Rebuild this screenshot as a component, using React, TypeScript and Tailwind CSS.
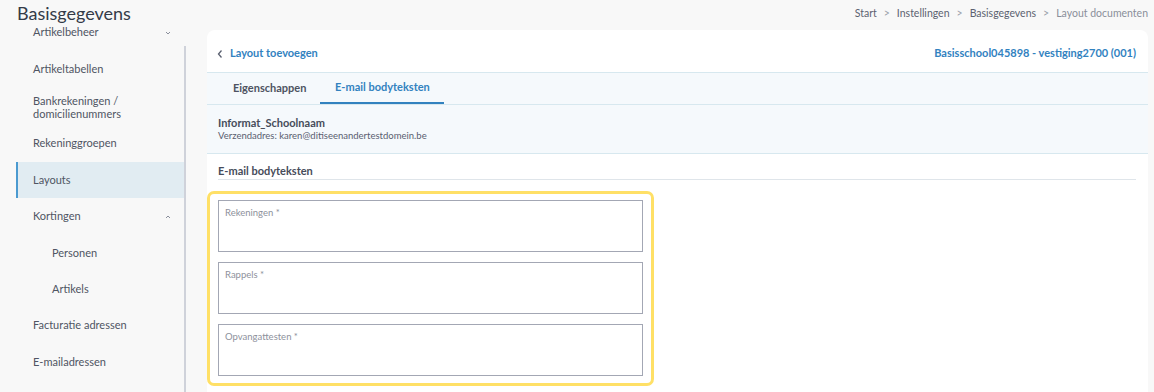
import React from "react";

const ChevDown = () => (
  <svg width="6" height="4" viewBox="0 0 6 4" className="text-[#8a8f9c]">
    <path d="M1 1 L3 3 L5 1" fill="none" stroke="currentColor" strokeWidth="1" />
  </svg>
);
const ChevUp = () => (
  <svg width="6" height="4" viewBox="0 0 6 4" className="text-[#8a8f9c]">
    <path d="M1 3 L3 1 L5 3" fill="none" stroke="currentColor" strokeWidth="1" />
  </svg>
);

const Sep = () => <span className="mx-[7px] text-[#9aa0aa]">&gt;</span>;

function SideItem({
  label,
  h,
  indent,
  active,
  chev,
  twoLine,
}: {
  label: React.ReactNode;
  h: string;
  indent?: boolean;
  active?: boolean;
  chev?: "down" | "up";
  twoLine?: boolean;
}) {
  const pad = active
    ? "bg-[#e1ecf2] border-l-2 border-[#4b9ad0] pl-[15px]"
    : indent
    ? "pl-[36px]"
    : "pl-[17px]";
  return (
    <div className={`flex items-center justify-between pr-[15px] ${h} ${pad}`}>
      <span className={`text-[11px] text-[#4f5563] ${twoLine ? "leading-[13px]" : ""}`}>{label}</span>
      {chev === "down" && <ChevDown />}
      {chev === "up" && <ChevUp />}
    </div>
  );
}

function Field({ label }: { label: string }) {
  return (
    <div className="h-[52px] border border-[#a3a7b4] bg-white px-[6px] pt-[2px] leading-[13px]">
      <span className="text-[9.5px] text-[#8d919c]">{label}</span>
    </div>
  );
}

export default function App() {
  return (
    <div
      className="w-[1154px] h-[392px] bg-[#f8f8f8] overflow-hidden relative"
      style={{ fontFamily: "Lato, 'Noto Sans', sans-serif" }}
    >
      <div className="h-[27px] flex items-start justify-between pl-[17px] pr-[6px]">
        <div className="text-[18px] leading-[24px] mt-[1px] text-[#343b48]">Basisgegevens</div>
        <div className="text-[10.5px] mt-[6px] text-[#5c6270] flex items-center">
          <span>Start</span>
          <Sep />
          <span>Instellingen</span>
          <Sep />
          <span>Basisgegevens</span>
          <Sep />
          <span className="text-[#8a8f9a]">Layout documenten</span>
        </div>
      </div>

      <div className="flex">
        <div className="relative w-[186px] h-[365px] overflow-hidden">
          <div className="w-[170px] ml-[16px] -mt-[13px]">
            <SideItem label="Artikelbeheer" h="h-[37px]" chev="down" />
            <SideItem label="Artikeltabellen" h="h-[37px]" />
            <SideItem
              label={
                <>
                  Bankrekeningen /<br />
                  domicilienummers
                </>
              }
              h="h-[37px]"
              twoLine
            />
            <SideItem label="Rekeninggroepen" h="h-[37px]" />
            <SideItem label="Layouts" h="h-[36px]" active />
            <SideItem label="Kortingen" h="h-[37px]" chev="up" />
            <SideItem label="Personen" h="h-[36px]" indent />
            <SideItem label="Artikels" h="h-[36px]" indent />
            <SideItem label="Facturatie adressen" h="h-[37px]" />
            <SideItem label="E-mailadressen" h="h-[36px]" />
          </div>
          <div className="absolute left-[184px] top-[19px] bottom-0 w-[2px] bg-[#cfd2da]" />
        </div>

        <div className="ml-[21px] mt-[3px] w-[941px] h-[400px] bg-white rounded-[8px] overflow-hidden">
          <div className="h-[42px] flex items-center justify-between pl-[9px] pr-[12px] pt-[5px]">
            <div className="flex items-center">
              <svg width="8" height="10" viewBox="0 0 8 10" className="text-[#5a6070]">
                <path d="M5.5 1.5 L2.5 5 L5.5 8.5" fill="none" stroke="currentColor" strokeWidth="1.3" />
              </svg>
              <span className="ml-[6px] text-[11px] font-bold text-[#3282bf]">Layout toevoegen</span>
            </div>
            <span className="text-[11px] font-bold text-[#3282bf]">Basisschool045898 - vestiging2700 (001)</span>
          </div>
          <div className="h-[32px] border-t border-[#d7e8ef] bg-[#f5f9fc] flex pl-[14px]">
            <div className="px-[12px] flex items-center text-[11px] font-bold text-[#4d5361]">Eigenschappen</div>
            <div className="ml-[2px] w-[124px] flex items-center justify-center text-[11px] font-bold text-[#3282bf] border-b-2 border-[#3282bf]">
              E-mail bodyteksten
            </div>
          </div>
          <div className="h-[50px] border-t border-b border-[#d7e8ef] bg-[#f5f9fc] pl-[11px] pt-[11px]">
            <div className="text-[11px] leading-[13px] font-bold text-[#464c5a]">Informat_Schoolnaam</div>
            <div className="text-[9.5px] leading-[13px] text-[#5a6070]">Verzendadres: karen@ditiseenandertestdomein.be</div>
          </div>
          <div className="px-[11px] pt-[9px]">
            <div className="text-[11px] leading-[16px] font-bold text-[#464c5a] pb-[0px] border-b border-[#dfe5ea] w-[918px]">
              E-mail bodyteksten
            </div>
          </div>
          <div className="mt-[11px] w-[447px] border-[3px] border-[#ffe066] rounded-[7px] px-[8px] pt-[6px] pb-[7px] flex flex-col gap-[10px]">
            <Field label="Rekeningen *" />
            <Field label="Rappels *" />
            <Field label="Opvangattesten *" />
          </div>
        </div>
      </div>
    </div>
  );
}
